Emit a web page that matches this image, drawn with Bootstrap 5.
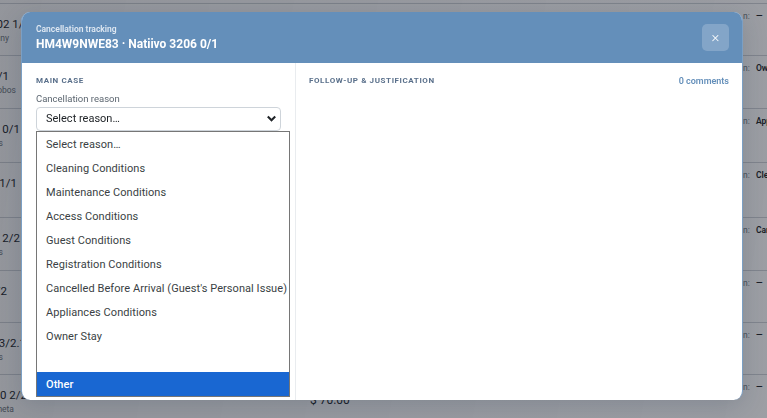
<!doctype html>
<html lang="en"><head><meta charset="utf-8"><title>Cancellation tracking</title>
<link rel="stylesheet" href="https://cdn.jsdelivr.net/npm/bootstrap@5.3.0/dist/css/bootstrap.min.css">
<style>
html,body{height:100%;overflow:hidden}
body{font-family:Roboto,"Liberation Sans",sans-serif;background:#fff;color:#212529;position:relative}
.bg-rows{height:418px;overflow:hidden;padding-top:3px;background:#fff}
.bg-row{border-top:1px solid #cfd3d8;position:relative;display:flex;justify-content:space-between}
.bg-l{display:flex;flex-direction:column;padding-top:12px}
.ln{display:flex;justify-content:flex-end;white-space:nowrap;font-size:11.5px;line-height:17px;color:#212529}
.ln.sub{font-size:8.5px;line-height:11px;color:#6c757d}
.e3{width:3px}.e7{width:7px}.e8{width:8px}.e9{width:9px}.e14{width:14px}.e16{width:16px}.e17{width:17px}.e20{width:20px}.e26{width:26px}.e27{width:27px}.e30{width:30px}
.bg-r{width:24px;padding-top:6px;font-size:8.5px;white-space:nowrap;overflow:hidden;color:#6c757d}
.bg-r b{color:#212529;margin-left:4px;font-weight:600}
.bg-amt{position:absolute;left:310px;top:18px;font-size:12px;line-height:14px}
.dim{position:absolute;inset:0;background:linear-gradient(100deg,rgba(20,25,38,.46),rgba(20,25,38,.42));backdrop-filter:blur(.7px)}
.dlg{position:absolute;left:21px;top:12px;width:722px;height:388px;border-radius:9px;border-left:1px solid #7b9fc4;border-right:1px solid #7b9fc4;overflow:hidden;background:#fff;box-shadow:0 6px 24px rgba(30,50,80,.18)}
.dlg-head{background:#648fba;height:51px;color:#fff;padding:0 13px 0 14px}
.dlg-kicker{font-size:8.5px;font-weight:600;line-height:12px;color:#dfe8f2}
.dlg-title{font-size:12px;font-weight:700;line-height:15px;margin-top:2px}
.dlg-x{width:27px;height:27px;border:0;border-radius:5px;background:#83a5c8;color:#fff;font-size:15px;font-weight:300;line-height:27px;padding:0}
.dlg-main{height:337px}
.pane-l{width:274px;border-right:1px solid #e9ecef;padding:12px 14px 0}
.pane-r{padding:12px 13px 0 13px}
.cap{font-size:8px;font-weight:700;letter-spacing:.6px;line-height:12px;color:#5a708b}
.fake-label{font-size:9.5px;line-height:12px;color:#5c6670;margin-top:6px}
.fake-select{width:245px;height:24px;margin-top:2px;border:1px solid #ced4da;border-radius:4px;padding:0 3px 0 9px;font-size:11px;color:#212529}
.fake-select svg{display:block}
.opt-list{position:absolute;left:14px;top:119px;width:254px;height:266px;background:#fff;border:1px solid #767676;font-size:11px;letter-spacing:.06px;color:#3a3f44;z-index:2}
.opt-list div{height:24px;line-height:26px;padding:0 9px;white-space:nowrap}
.opt-list .sel{background:#1967d2;color:#fff;font-weight:500}
.comments{font-size:9px;font-weight:600;line-height:12px;color:#648fba}
</style></head><body>
<div class="bg-rows">
<div class="bg-row" style="height:52px"><div class="bg-l"><div class="ln e30">Natiivo 3102 1/1</div><div class="ln sub e9">Sunny</div></div><div class="bg-r">n: <b>—</b></div></div>
<div class="bg-row" style="height:53px"><div class="bg-l"><div class="ln e9">Natiivo 4 1/1</div><div class="ln sub e16">Lobos</div></div><div class="bg-r">n: <b>Owner</b></div></div>
<div class="bg-row" style="height:54px"><div class="bg-l"><div class="ln e20">Natiivo 3206 0/1</div><div class="ln sub e3">Os</div></div><div class="bg-r">n: <b>Appliances</b></div></div>
<div class="bg-row" style="height:55px"><div class="bg-l"><div class="ln e17">Natiivo 1/1</div></div><div class="bg-r">n: <b>Cleaning</b></div></div>
<div class="bg-row" style="height:53px"><div class="bg-l"><div class="ln e20">Hotel 2/2</div><div class="ln sub e3">Is</div></div><div class="bg-r">n: <b>Cancelled</b></div></div>
<div class="bg-row" style="height:52px"><div class="bg-l"><div class="ln e7">Natiivo 2/2</div></div><div class="bg-r">n: <b>—</b></div></div>
<div class="bg-row" style="height:52px"><div class="bg-l"><div class="ln e26">Natiivo 1. 3/2.1</div><div class="ln sub e3">Os</div></div><div class="bg-r">n: <b>—</b></div></div>
<div class="bg-row" style="height:44px"><div class="bg-l"><div class="ln e27">Natiivo 10 2/2</div><div class="ln sub e14">Planeta</div></div><div class="bg-amt">$ 70.00</div><div class="bg-r">n: <b>—</b></div></div>
</div>
<div class="dim"></div>
<div class="dlg d-flex flex-column">
  <div class="dlg-head d-flex align-items-center justify-content-between">
    <div><div class="dlg-kicker">Cancellation tracking</div><div class="dlg-title">HM4W9NWE83 · Natiivo 3206 0/1</div></div>
    <button class="dlg-x" type="button" aria-label="Close">×</button>
  </div>
  <div class="dlg-main d-flex">
    <div class="pane-l">
      <div class="cap">MAIN CASE</div>
      <div class="fake-label">Cancellation reason</div>
      <div class="fake-select d-flex align-items-center justify-content-between"><span>Select reason…</span>
        <svg width="11" height="8" viewBox="0 0 11 8"><path d="M1.8 1.6 5.5 5.3 9.2 1.6" fill="none" stroke="#212529" stroke-width="2.1"/></svg></div>
    </div>
    <div class="pane-r flex-grow-1 d-flex justify-content-between">
      <div class="cap">FOLLOW-UP &amp; JUSTIFICATION</div><div class="comments">0 comments</div>
    </div>
  </div>
  <div class="opt-list">
    <div>Select reason…</div><div>Cleaning Conditions</div><div>Maintenance Conditions</div><div>Access Conditions</div><div>Guest Conditions</div><div>Registration Conditions</div><div>Cancelled Before Arrival (Guest's Personal Issue)</div><div>Appliances Conditions</div><div>Owner Stay</div><div></div><div class="sel">Other</div>
  </div>
</div>
</body></html>
